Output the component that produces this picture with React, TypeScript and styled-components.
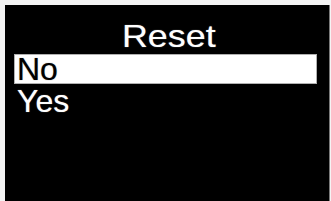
import styled, { createGlobalStyle } from 'styled-components'

const GlobalStyle = createGlobalStyle`
  html, body {
    margin: 0;
    padding: 0;
    background: #ffffff;
  }
`

const Frame = styled.div`
  width: 331px;
  height: 201px;
  box-sizing: border-box;
  padding: 5px 1px 0 5px;
  background: #f4f4f4;
  overflow: hidden;
`

const Screen = styled.div`
  height: 100%;
  box-sizing: border-box;
  background: #000000;
  border-right: 1px solid #7a7a7a;
  padding: 16px 12px 0 9px;
  display: flex;
  flex-direction: column;
  gap: 2px;
  font-family: 'Liberation Sans', Arial, sans-serif;
  color: #ffffff;
`

const Title = styled.div`
  height: 31px;
  text-align: center;
  padding-left: 6px;
`

const TitleText = styled.span`
  display: inline-block;
  font-size: 32px;
  line-height: 31px;
  transform: scaleX(1.12);
  text-shadow: 0 0 1px rgba(255, 255, 255, 0.6);
`

const Menu = styled.ul`
  list-style: none;
  margin: 0;
  padding: 0;
  display: flex;
  flex-direction: column;
  gap: 2px;
`

const Item = styled.li<{ $selected?: boolean }>`
  box-sizing: border-box;
  height: 30px;
  padding: 1px 0 0 2px;
  font-size: 32px;
  line-height: 27px;
  border: 1px solid ${(p) => (p.$selected ? '#b0b0b0' : 'transparent')};
  background: ${(p) => (p.$selected ? '#ffffff' : 'transparent')};
  color: ${(p) => (p.$selected ? '#000000' : '#ffffff')};
  text-shadow: 0 0 1px
    ${(p) => (p.$selected ? 'rgba(0, 0, 0, 0.5)' : 'rgba(255, 255, 255, 0.6)')};
`

const options = ['No', 'Yes']

export default function App() {
  const selected = 0
  return (
    <>
      <GlobalStyle />
      <Frame>
        <Screen>
          <Title>
            <TitleText>Reset</TitleText>
          </Title>
          <Menu>
            {options.map((opt, i) => (
              <Item key={opt} $selected={i === selected}>
                {opt}
              </Item>
            ))}
          </Menu>
        </Screen>
      </Frame>
    </>
  )
}
